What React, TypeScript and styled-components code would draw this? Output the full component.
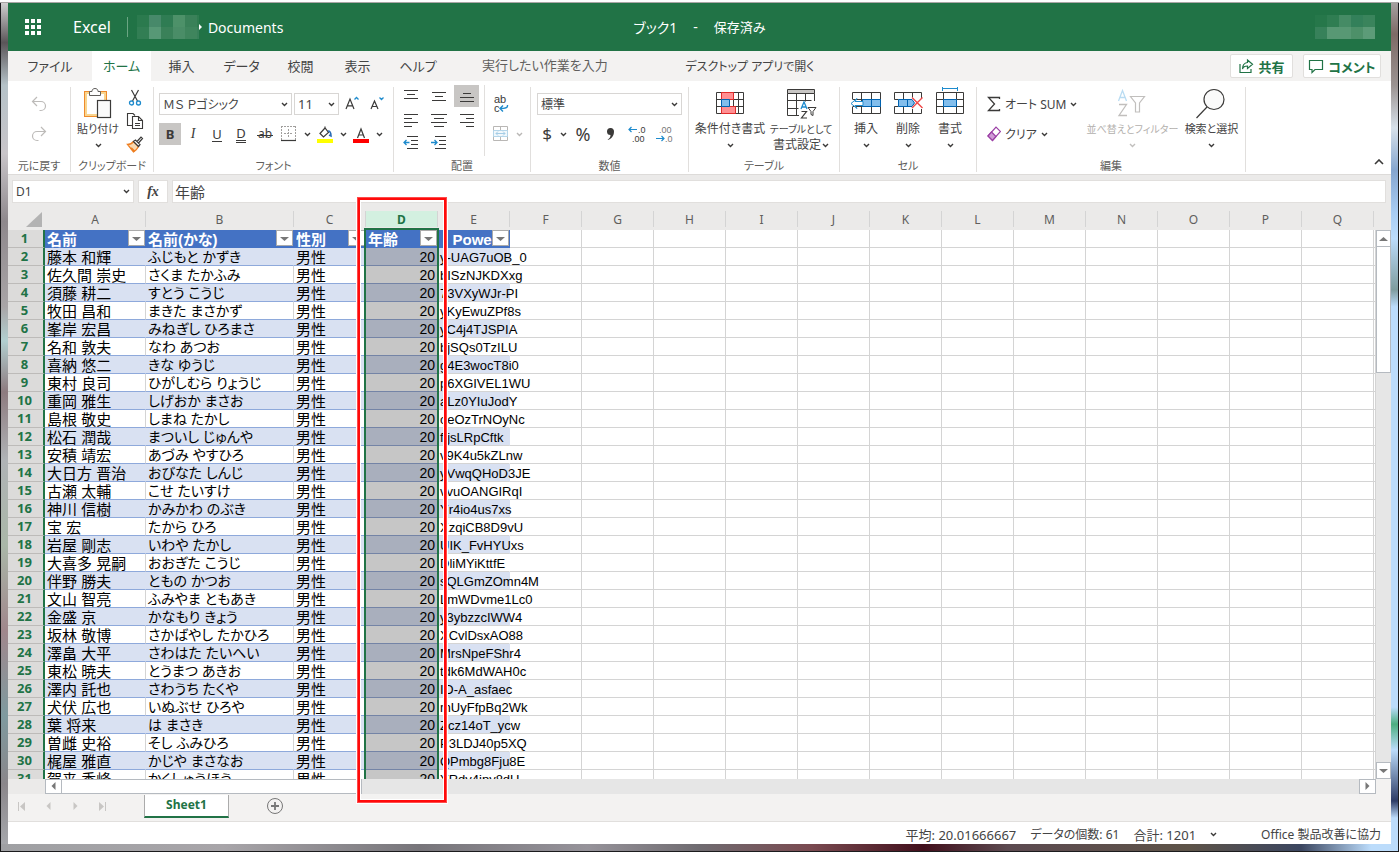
import React from "react";
import styled, { createGlobalStyle, css } from "styled-components";

const GREEN = "#217346";
const INK = "#444444";
const DARK = "#3b3a39";
const BLUE = "#1e8bcd";
const LINE = "#d4d4d4";

const GlobalStyle = createGlobalStyle`
  *, *::before, *::after { box-sizing: border-box; }
  body {
    margin: 0;
    font-family: "Noto Sans", "Noto Sans CJK JP", sans-serif;
    font-size: 12px;
    color: ${INK};
    font-feature-settings: "palt";
  }
  button, input, select { font: inherit; color: inherit; font-feature-settings: inherit; }
`;

/* ---------- window frame ---------- */

const Desktop = styled.div`
  display: flex;
  flex-direction: column;
  height: 100vh;
  min-height: 600px;
  padding: 3px 8px 8px;
  background:
    linear-gradient(#fdfdfd 0 2px, #a9a5a5 2px 3px) top / 100% 3px no-repeat,
    linear-gradient(#1b1b1d, #1b1b1d) left / 1px 100% no-repeat,
    linear-gradient(#1b1b1d, #1b1b1d) right / 1px 100% no-repeat,
    linear-gradient(#1b1b1d, #1b1b1d) bottom / 100% 1px no-repeat,
    linear-gradient(90deg, #9fa0a3, #a8a5a9 16%, #77757a 30%, #96939a 42%, #6f6b70 50%, #7a4a50 58%, #42101c 66%, #5c4a50 72%, #5d5348 85%, #3b4660 93%, #bcdcfb 98%) bottom / 100% 8px no-repeat,
    linear-gradient(#a9a5a5, #7d6a66 4%, #9b9391 10%, #d7e1ea 15%, #86a6cf 20%, #a9cdf3 25%, #bcdcfb 28%, #7f9c9e 34%, #bcdcfb 36%, #bcdcfb 83%, #4cae80 85%, #bcdcfb 88%, #2d3c66 94%, #bcdcfb 96%) right / 8px 100% no-repeat,
    linear-gradient(#d8d8d8, #5a5558 5%, #b5c2c8 10%, #c9c5c9 18%, #8e888c 26%, #a9a5a7 36%, #b2cfd0 40%, #8d7b7f 46%, #b0b3b6 54%, #aab7a8 64%, #a0878c 74%, #7f9a9f 84%, #8a868a 92%, #a9abaf) left / 8px 100% no-repeat;
`;

const AppWindow = styled.div`
  position: relative;
  flex: 1;
  min-height: 0;
  display: flex;
  flex-direction: column;
  background: #fff;
`;

/* ---------- title bar ---------- */

const TitleBar = styled.header`
  display: grid;
  grid-template-columns: 1fr auto 1fr;
  align-items: center;
  height: 48px;
  flex: none;
  background: ${GREEN};
  color: #fff;
  font-size: 14px;
`;
const TitleSide = styled.div<{ $end?: boolean }>`
  display: flex;
  align-items: center;
  height: 100%;
  ${(p) => (p.$end ? "justify-content: flex-end; padding: 0 16px 0 0;" : "padding: 0 0 0 16px;")}
`;
const PlainButton = styled.button`
  display: inline-flex;
  align-items: center;
  justify-content: center;
  padding: 0;
  border: 0;
  background: none;
  cursor: pointer;
`;
const Brand = styled.a`
  margin: 0 16px 0 31px;
  color: #fff;
  font-size: 16px;
  text-decoration: none;
`;
const Crumb = styled.a`
  color: #fff;
  text-decoration: none;
`;
const TitleRule = styled.span`
  width: 1px;
  height: 20px;
  margin-right: 9px;
  background: #6ba583;
`;
const Mosaic = styled.div`
  display: grid;
  grid-auto-rows: 12px;
  overflow: hidden;
`;
const Tile = styled.span``;
const Title = styled.h1`
  display: flex;
  gap: 16px;
  margin: 0;
  font-size: 14px;
  font-weight: 400;
`;
const Saved = styled.span`
  font-size: 13px;
  line-height: 20px;
`;

/* ---------- tabs ---------- */

const TabBar = styled.nav`
  display: flex;
  align-items: center;
  height: 30px;
  flex: none;
  padding-right: 10px;
  background: #f3f2f1;
  font-size: 13px;
`;
const Tab = styled.button<{ $active?: boolean; $w: number }>`
  width: ${(p) => p.$w}px;
  height: 30px;
  padding: 0 0 2px;
  border: 0;
  white-space: nowrap;
  background: ${(p) => (p.$active ? "#fff" : "none")};
  color: ${(p) => (p.$active ? GREEN : INK)};
`;
const OpenInApp = styled(Tab)`
  padding: 0;
  font-size: 12px;
`;
const TellMe = styled.input`
  width: 198px;
  margin-left: 31px;
  padding: 0 0 2px;
  border: 0;
  background: none;
  outline: 0;
  &::placeholder { color: #605e5c; opacity: 1; }
`;
const Spacer = styled.div`
  flex: 1;
`;
const CardButton = styled.button<{ $w: number }>`
  display: flex;
  align-items: center;
  justify-content: center;
  gap: 4px;
  width: ${(p) => p.$w}px;
  height: 24px;
  margin-left: 10px;
  padding: 0;
  border: 1px solid #e1dfdd;
  border-radius: 2px;
  background: #fff;
  color: ${GREEN};
  font-size: 13px;
  font-weight: 700;
`;

/* ---------- ribbon ---------- */

const Ribbon = styled.section`
  display: flex;
  height: 93px;
  flex: none;
  padding: 6px 0 2px;
  background: #fff;
`;
const Group = styled.div<{ $w: number }>`
  display: flex;
  flex-direction: column;
  width: ${(p) => p.$w}px;
  flex: none;
  border-right: 1px solid #e1dfdd;
`;
const GroupBody = styled.div`
  display: flex;
  flex: 1;
  min-height: 0;
`;
const GroupLabel = styled.div`
  height: 16px;
  line-height: 20px;
  font-size: 11px;
  text-align: center;
  white-space: nowrap;
  color: #605e5c;
`;
const Stack = styled.div<{ $pad?: string }>`
  display: flex;
  flex-direction: column;
  padding: ${(p) => p.$pad || "0"};
`;
const Row = styled.div<{ $pad?: string; $gap?: number; $top?: boolean }>`
  display: flex;
  align-items: ${(p) => (p.$top ? "flex-start" : "center")};
  padding: ${(p) => p.$pad || "0"};
  gap: ${(p) => p.$gap || 0}px;
`;
const Tool = styled(PlainButton)<{ $w?: number; $h?: number; $on?: boolean }>`
  width: ${(p) => p.$w || 24}px;
  height: ${(p) => p.$h || 22}px;
  flex: none;
  background: ${(p) => (p.$on ? "#c8c6c4" : "none")};
`;
const Big = styled.button<{ $w: number; $off?: boolean }>`
  display: flex;
  flex-direction: column;
  align-items: center;
  width: ${(p) => p.$w}px;
  flex: none;
  padding: 0;
  border: 0;
  background: none;
  line-height: 16px;
  white-space: nowrap;
  color: ${(p) => (p.$off ? "#b3b0ad" : INK)};
  > svg:first-child { margin-bottom: 2px; flex: none; }
`;
const BigText = styled.span<{ $size?: number }>`
  display: flex;
  align-items: center;
  justify-content: center;
  gap: 1px;
  height: 16px;
  font-size: ${(p) => p.$size || 12}px;
`;
const Glyph = styled.span<{ $kind?: "b" | "i" | "u" | "d" | "s"; $size?: number }>`
  font-size: ${(p) => p.$size || 13}px;
  line-height: 16px;
  color: ${DARK};
  ${(p) => p.$kind === "b" && css`font-weight: 700;`}
  ${(p) => p.$kind === "i" && css`font-family: "Liberation Serif", serif; font-style: italic; font-size: 14px;`}
  ${(p) => p.$kind === "u" && css`line-height: 14px; border-bottom: 1px solid ${DARK};`}
  ${(p) => p.$kind === "d" && css`line-height: 14px; border-bottom: 3px double ${DARK};`}
  ${(p) => p.$kind === "s" && css`
    padding: 0 1px;
    font-size: 12px;
    background: linear-gradient(${DARK}, ${DARK}) 0 9px / 100% 1px no-repeat;
  `}
`;
const PickBox = styled.label<{ $w: number }>`
  display: grid;
  align-items: center;
  width: ${(p) => p.$w}px;
  height: 22px;
  flex: none;
  border: 1px solid #d8d6d4;
  background: #fff;
  > * { grid-area: 1 / 1; }
  > svg { justify-self: end; margin-right: 3px; pointer-events: none; }
`;
const Pick = styled.select<{ $size?: number }>`
  appearance: none;
  width: 100%;
  height: 20px;
  padding: 0 12px 0 3px;
  border: 0;
  background: none;
  font-size: ${(p) => p.$size || 12}px;
  outline: 0;
`;
const VRule = styled.div`
  width: 1px;
  height: 71px;
  margin: -2px 0 0 5px;
  background: #e1dfdd;
`;
const AlignGrid = styled.div`
  display: grid;
  grid-template-columns: 28px 27px 27px;
  grid-auto-rows: 23px;
  justify-items: center;
  margin: -2px 0 0 3px;
  > :nth-child(3n) { justify-self: end; }
`;
const TextTool = styled.button`
  display: flex;
  align-items: center;
  gap: 4px;
  height: 30px;
  padding: 0;
  border: 0;
  background: none;
  white-space: nowrap;
`;
const Collapse = styled(PlainButton)`
  align-self: flex-end;
  width: 14px;
  height: 14px;
  margin: 0 5px 3px auto;
`;

/* ---------- formula bar ---------- */

const FormulaBar = styled.div`
  display: flex;
  gap: 4px;
  height: 33px;
  flex: none;
  padding: 5px 5px 5px 4px;
  border-top: 1px solid #dddbd9;
  background: #ebeae9;
`;
const NameBox = styled(PickBox)`
  height: 23px;
  border-color: #e1dfdd;
`;
const FxButton = styled(PlainButton)`
  width: 30px;
  height: 23px;
  border: 1px solid #e1dfdd;
  background: #fff;
  font: italic 700 14px "Liberation Serif", serif;
`;
const FormulaInput = styled.input`
  flex: 1;
  min-width: 0;
  height: 23px;
  padding: 0 2px;
  border: 1px solid #e1dfdd;
  background: #fff;
  font-size: 15px;
  font-family: "Liberation Sans", "Noto Sans CJK JP", sans-serif;
  outline: 0;
`;

/* ---------- sheet ---------- */

const SheetArea = styled.div`
  display: flex;
  flex: 1;
  min-height: 0;
  background: #fff;
`;
const Grid = styled.div`
  position: relative;
  flex: 1;
  min-width: 0;
  overflow: hidden;
`;
const Table = styled.table`
  width: 100%;
  table-layout: fixed;
  border-collapse: separate;
  border-spacing: 0;
`;
const ColHead = styled.th<{ $on?: boolean }>`
  height: 23px;
  padding: 4px 0 3px;
  background: #ebeae9;
  font-size: 12px;
  line-height: 18px;
  font-weight: ${(p) => (p.$on ? 700 : 400)};
  color: ${(p) => (p.$on ? GREEN : "#605e5c")};
  > span {
    display: block;
    height: 16px;
    border-right: 1px solid ${LINE};
    background: ${(p) => (p.$on ? "#d3f0e0" : "none")};
  }
`;
const Corner = styled.th`
  padding: 0;
  background: #ebeae9;
  vertical-align: bottom;
  > svg { display: block; margin: 0 0 3px 18px; }
`;
const RowHead = styled.th`
  height: 18px;
  padding: 0 2px 0 0;
  border-right: 2px solid ${GREEN};
  border-bottom: 1px solid #bdbbb9;
  background: #dcdbda;
  color: ${GREEN};
  font-size: 13px;
  line-height: 17px;
`;
const cellBase = css`
  height: 18px;
  padding: 2px 0 0 2px;
  font-family: "Liberation Sans", "Noto Sans CJK JP", sans-serif;
  line-height: 15px;
  white-space: nowrap;
  text-align: left;
`;
const Cell = styled.td<{ $band?: boolean; $kind?: "num" | "spill" | "kanji" | "kana" }>`
  ${cellBase}
  border-bottom: 1px solid ${(p) => (p.$kind ? "#8ea9db" : LINE)};
  border-right: 1px solid ${(p) => (p.$kind === "spill" ? "transparent" : p.$kind && p.$band ? "transparent" : LINE)};
  background: ${(p) => (p.$band && p.$kind ? "#d9e1f2" : "transparent")};
  font-size: ${(p) => (p.$kind === "kanji" ? 15 : 14)}px;
  color: #000;
  ${(p) =>
    p.$kind === "num" &&
    css`
      padding: 2px 2px 0 0;
      text-align: right;
      background: ${p.$band ? "#a9afbd" : "#c6c6c6"};
      border-bottom-color: #7484a6;
    `}
  ${(p) => p.$kind === "spill" && css`font-size: 13px; border-bottom-color: ${LINE};`}
`;
const FieldHead = styled.th`
  ${cellBase}
  padding: 0 1px 0 2px;
  border-bottom: 1px solid #4472c4;
  background: #4472c4;
  color: #fff;
  font-size: 15px;
  font-weight: 700;
  > div { display: flex; height: 17px; }
  > div > span { flex: 1; min-width: 0; overflow-x: clip; line-height: 20px; }
`;
const Filter = styled(PlainButton)`
  width: 17px;
  height: 16px;
  flex: none;
  border: 1px solid #ababab;
  background: #fff;
`;
const Selection = styled.div`
  position: absolute;
  top: 21px;
  bottom: 0;
  left: 356px;
  width: 75px;
  border: 2px solid ${GREEN};
  border-bottom: 0;
  pointer-events: none;
`;
const VScroll = styled.div`
  display: flex;
  flex-direction: column;
  width: 15px;
  flex: none;
  padding-top: 23px;
  background: linear-gradient(#ebeae9 0 23px, #e6e6e6 23px);
`;
const ScrollButton = styled(PlainButton)<{ $w: number; $h: number }>`
  width: ${(p) => p.$w}px;
  height: ${(p) => p.$h}px;
  flex: none;
  border: 1px solid #b5bac0;
  background: #fff;
`;
const VThumb = styled.div`
  height: 126px;
  border: 1px solid #b5bac0;
  border-top: 0;
  background: #fff;
`;
const HScroll = styled.div`
  display: flex;
  height: 15px;
  flex: none;
  margin: 0 15px 0 0;
  padding-left: 37px;
  background: linear-gradient(90deg, #ebeae9 0 37px, #e6e6e6 37px);
`;
const HThumb = styled.div`
  width: 300px;
  border: 1px solid #b5bac0;
  border-left: 0;
  background: #fff;
`;
const Bottom = styled.div`
  flex: none;
  background: #f3f2f1;
`;
const SheetTabs = styled.div`
  display: flex;
  align-items: center;
  height: 28px;
  padding: 0 0 3px 7px;
  border-bottom: 1px solid #e1dfdd;
`;
const NavButton = styled(PlainButton)`
  width: 12px;
  height: 12px;
  margin-right: 15px;
`;
const SheetTab = styled.button`
  width: 85px;
  height: 23px;
  margin: 0 37px 0 21px;
  padding: 0;
  border: 1px solid #ababab;
  border-width: 0 1px 2px;
  border-bottom-color: ${GREEN};
  background: #fff;
  color: ${GREEN};
  font-size: 12px;
  font-weight: 700;
  line-height: 16px;
`;
const StatusBar = styled.footer`
  display: flex;
  align-items: center;
  justify-content: flex-end;
  gap: 14px;
  height: 22px;
  flex: none;
  padding: 2px 10px 0 0;
  background: #fff;
  font-size: 12px;
  white-space: nowrap;
  > a { margin-left: 30px; color: inherit; text-decoration: none; }
`;
const Stat = styled.span`
  font-size: 13px;
`;
/* Red highlight laid over the selected column */
const Highlight = styled.div`
  position: absolute;
  top: 195px;
  bottom: 42px;
  left: 350px;
  width: 88px;
  border: 2px solid #ff0a0a;
  box-shadow: 0 0 0 1px #ff4a4a, 0 0 0 2px #fff, inset 0 0 0 1px #fff;
  pointer-events: none;
`;

/* ---------- icons ---------- */

const Chev = ({ color = DARK, up }: { color?: string; up?: boolean }) => (
  <svg width="7" height="5" viewBox="0 0 7 5" fill="none" stroke={color} strokeWidth="1.4">
    <path d={up ? "M.7 4 3.5 1.2 6.3 4" : "M1 1l2.500 2.500L6 1"} />
  </svg>
);
const Tri = ({ d, color = "#777" }: { d: string; color?: string }) => (
  <svg width="9" height="9" viewBox="0 0 9 9" fill={color}>
    <path d={d} />
  </svg>
);
const TRI = {
  down: "M0 3h9L4.500 7z",
  up: "M0 7h9L4.500 3z",
  left: "M6.500 0v8L2.500 4z",
  right: "M2.500 0v8L6.500 4z",
};

const Waffle = () => (
  <svg width="18" height="18" viewBox="0 0 18 18" fill="#fff">
    {[1, 7, 13].map((y) => [1, 7, 13].map((x) => <rect key={`${x}-${y}`} x={x} y={y} width="4" height="4" />))}
  </svg>
);
const UndoIcon = ({ flip }: { flip?: boolean }) => (
  <svg width="16" height="16" viewBox="0 0 16 16" fill="none" stroke="#bdbbb9" strokeWidth="1.2">
    <g transform={flip ? "matrix(-1 0 0 1 16 0)" : undefined}>
      <path d="M6 1 1.500 5.500 6 10M1.500 5.500H10a4.500 4.500 0 0 1 0 9H8.500" />
    </g>
  </svg>
);
const PasteIcon = () => (
  <svg width="30" height="32" viewBox="0 0 30 32" fill="none">
    <rect x="2.500" y="5.500" width="20" height="23" fill="#fff" stroke="#f9d58f" strokeWidth="3" />
    <rect x="1.500" y="4.500" width="22" height="25" stroke="#ee8b2c" />
    <path d="M6.500 8.500v-4H9C9 2.500 10.200 1.500 12 1.500s3 1 3 3h2.500v4z" fill="#fff" stroke="#605e5c" />
    <rect x="14.500" y="13.500" width="13" height="17" fill="#fafafa" stroke={DARK} strokeWidth="1.200" />
  </svg>
);
const CutIcon = () => (
  <svg width="16" height="18" viewBox="0 0 16 18" fill="none">
    <path d="M4.500 1 10.500 12M11.500 1 5.500 12" stroke={DARK} strokeWidth="1.200" />
    <circle cx="4.500" cy="14" r="2" stroke={BLUE} strokeWidth="1.300" />
    <circle cx="11.500" cy="14" r="2" stroke={BLUE} strokeWidth="1.300" />
  </svg>
);
const CopyIcon = () => (
  <svg width="18" height="18" viewBox="0 0 18 18" fill="none" stroke={DARK} strokeWidth="1.100">
    <path d="M6 13.500H1.500v-12H7l2 2M6.500 4.500h6l4 4v8h-10zM12.500 4.500v4h4M9 11.500h5M9 13.500h5" />
  </svg>
);
const BrushIcon = () => (
  <svg width="18" height="18" viewBox="0 0 18 18" fill="none">
    <path d="M1.500 9.500c3 0 4.500-1 6-3l5 5c-1 2-2.500 4-5 5.500z" fill="#f9d9b0" stroke="#ee7f22" strokeWidth="1.300" />
    <path d="m5 13 3.500 3.500" stroke="#ee7f22" strokeWidth="2" />
    <path d="m7.500 6.500 2-1.500 4.500 4.500-1.500 2zM11 6.500 15 2l1.500 1.500-4 4.500" fill="#fff" stroke={DARK} strokeWidth="1.200" />
  </svg>
);
const FontSizeIcon = ({ down }: { down?: boolean }) => (
  <svg width="18" height="16" viewBox="0 0 18 16" fill="none">
    <path d={down ? "M3 13 6.500 5 10 13M4.200 10.500h4.600" : "M2 13 6 3l4 10M3.400 9.800h5.200"} stroke={DARK} strokeWidth="1.200" />
    <path d={down ? "m11.500 1.500 2 2 2-2" : "m10.500 3.500 2-2 2 2"} stroke={BLUE} strokeWidth="1.300" />
  </svg>
);
const BorderIcon = () => (
  <svg width="16" height="16" viewBox="0 0 16 16" fill="none" stroke="#a19f9d">
    <path d="M0 .5h15M.5 0v14M14.500 0v14M7.500 3v9M3 7.500h9" strokeDasharray="2 1" />
    <path d="M0 14.500h15" stroke={DARK} strokeWidth="1.200" />
  </svg>
);
const FillIcon = () => (
  <svg width="17" height="17" viewBox="0 0 17 17" fill="none">
    <path d="M3 7.500 8 2l3.500 4.500-5 4.500zM8 2V.5" stroke={DARK} strokeWidth="1.200" />
    <path d="M11 5c2 0 3 1 3 5l-2-1" stroke="#2b6cb5" strokeWidth="1.600" />
    <rect y="13" width="16" height="4" fill="#ffff00" />
  </svg>
);
const FontColorIcon = () => (
  <svg width="17" height="17" viewBox="0 0 17 17" fill="none">
    <path d="M4.500 12 8 3l3.500 9M5.700 9h4.600" stroke={DARK} strokeWidth="1.200" />
    <rect y="13" width="16" height="4" fill="#ff0000" />
  </svg>
);
const LINES: Record<string, string> = {
  top: "M0 1.500h14M3 5.500h8M0 9.500h14",
  mid: "M0 3.500h14M3 7.500h8M0 11.500h14",
  bot: "M3 4.500h8M0 8.500h14M0 12.500h14",
  left: "M0 1.500h14M0 5.500h8M0 9.500h14M0 13.500h8",
  center: "M0 1.500h16M3 5.500h10M0 9.500h16M3 13.500h10",
  right: "M0 1.500h14M6 5.500h8M0 9.500h14M6 13.500h8",
};
const LinesIcon = ({ k }: { k: string }) => (
  <svg width={k === "center" ? 16 : 14} height="15" viewBox={`0 0 ${k === "center" ? 16 : 14} 15`} stroke={DARK}>
    <path d={LINES[k]} />
  </svg>
);
const IndentIcon = ({ more }: { more?: boolean }) => (
  <svg width="16" height="14" viewBox="0 0 16 14" fill="none" stroke={DARK}>
    <path d="M4 .5h11M8 4.500h7M8 8.500h7M4 12.500h11" />
    <path d={more ? "M0 6.500h6M3.500 4 6 6.500 3.500 9" : "M6.500 6.500H1M3.500 4 1 6.500 3.500 9"} stroke={BLUE} strokeWidth="1.300" />
  </svg>
);
const svgText = { fontFamily: '"Liberation Sans", sans-serif' };
const WrapIcon = () => (
  <svg width="18" height="22" viewBox="0 0 18 22" fill="none">
    <text x="2" y="10" fontSize="11" fill={DARK} style={svgText}>ab</text>
    <text x="2" y="19" fontSize="11" fill={DARK} style={svgText}>c</text>
    <path d="M15.500 12v1c0 2-2 2.500-7 2.500M11 12.500l-3 3 3 3" stroke={BLUE} strokeWidth="1.400" />
  </svg>
);
const MergeIcon = () => (
  <svg width="16" height="16" viewBox="0 0 16 16" fill="none" stroke="#b9b7b5">
    <path d="M.5.5h14v14H.5zM7.500.5V4M7.500 11v3.500" />
    <path d="M.5 4.500h14v6H.5z" stroke="#b5d6ea" fill="#f1f8fc" />
    <path d="M3 7.500h9M5 5.500l-2 2 2 2M10 5.500l2 2-2 2" stroke="#a5cde6" />
  </svg>
);
const DecIcon = ({ less }: { less?: boolean }) => (
  <svg width="20" height="22" viewBox="0 0 20 22" fill="none">
    <text x={less ? 4 : 10} y="10" fontSize="9" fill={less ? "#777" : DARK} style={svgText}>{less ? ".00" : ".0"}</text>
    <text x={less ? 10 : 4} y="19" fontSize="9" fill={less ? "#777" : DARK} style={svgText}>{less ? ".0" : ".00"}</text>
    <path d={less ? "M1 15.500h8M6.500 13 9 15.500 6.500 18" : "M9 6.500H1M3.500 4 1 6.500 3.500 9"} stroke={BLUE} strokeWidth="1.200" />
  </svg>
);
const CondIcon = () => (
  <svg width="30" height="32" viewBox="0 0 30 32" fill="none">
    <path d="M1.500 5.500h27v21h-27zM1.500 12.500h27M1.500 19.500h27M6.500 5.500v21M18.500 5.500v21M23.500 5.500v21" stroke={DARK} />
    <path d="M6.500 5.500h12v7h-12zM6.500 19.500h14v7h-14z" fill="#ff8f92" stroke="#e02b2b" />
    <path d="M6.500 12.500h8v7h-8z" fill="#83beec" stroke="#0063b1" />
  </svg>
);
const TableIcon = () => (
  <svg width="32" height="32" viewBox="0 0 32 32" fill="none">
    <path d="M2.500 2.500h27v4h-27z" fill="#c8c6c4" stroke={DARK} />
    <path d="M2.500 6.500v22H14M29.500 6.500V14M2.500 13.500h24M2.500 21.500h11M11.500 6.500v22M20.500 6.500v8" stroke={DARK} />
    <path d="M16 22l3-7 3 7M17 20h4" stroke={BLUE} strokeWidth="1.300" />
    <path d="M16.500 24.500h5l-5 6.500h5.500" stroke={DARK} strokeWidth="1.200" />
    <path d="M23 20.500h8l-3 4v4l-2-1v-3z" stroke={DARK} />
  </svg>
);
const InsertIcon = () => (
  <svg width="32" height="32" viewBox="0 0 32 32" fill="none">
    <path d="M2.500 12V5.500h28v21h-28V20M11.500 5.500v21M21.500 5.500v21M2.500 12.500h28M2.500 19.500h28" stroke={DARK} />
    <path d="M12.500 12.500h18v7h-18zM21.500 12.500v7" fill="#83beec" stroke="#0063b1" />
    <path d="M13 14.500H5l2-3-6 5 6 5-2-3h8z" fill="#fff" stroke={BLUE} />
  </svg>
);
const DeleteIcon = () => (
  <svg width="32" height="32" viewBox="0 0 32 32" fill="none">
    <path d="M2.500 12.500v-7h27V12M2.500 19.500v7h27V22M11.500 5.500v7M20.500 5.500v5M11.500 19.500v7M20.500 22v4.500M2.500 12.500h4M2.500 19.500h4" stroke={DARK} />
    <path d="M6.500 12.500H20l2.500 3.500-2.500 3.500H6.500zM15.500 12.500v7" fill="#83beec" stroke="#0063b1" />
    <path d="M20 10.500 30.500 21M30.500 10.500 20 21" stroke="#f04747" strokeWidth="1.400" />
  </svg>
);
const FormatIcon = () => (
  <svg width="32" height="32" viewBox="0 0 32 32" fill="none">
    <path d="M2.500 5.500h27v21h-27zM9.500 5.500v21M22.500 5.500v21M2.500 12.500h27M2.500 19.500h27" stroke={DARK} />
    <path d="M9.500 12.500h13v7h-13z" fill="#83beec" stroke="#0063b1" />
    <path d="M8.500 1.500h15M8.500 0v4M23.500 0v4" stroke={BLUE} />
  </svg>
);
const SigmaIcon = () => (
  <svg width="14" height="16" viewBox="0 0 14 16" fill="none" stroke={DARK} strokeWidth="1.300">
    <path d="M12.500 3V1.500h-11L7.500 8l-6 6.500h11V13" />
  </svg>
);
const EraserIcon = () => (
  <svg width="14" height="16" viewBox="0 0 14 16" fill="none" stroke="#9b3fa5" strokeWidth="1.200">
    <path d="m1 10 8-9 4.500 4.500-8 9z" fill="#fff" />
    <path d="M4.500 6 9 10.500l-3.500 4L1 10z" fill="#cf9bd6" />
  </svg>
);
const SortIcon = () => (
  <svg width="30" height="32" viewBox="0 0 30 32" fill="none">
    <path d="m1.500 14 4-10.500 4 10.500M3 10.500h5" stroke="#b9dcf2" strokeWidth="1.300" />
    <path d="M2 17.500h7.500L2 28.500h8" stroke="#c1bfbd" strokeWidth="1.300" />
    <path d="M13.500 9.500h14L22.500 16v9h-4v-9z" stroke="#c1bfbd" strokeWidth="1.200" />
  </svg>
);
const FindIcon = () => (
  <svg width="32" height="32" viewBox="0 0 32 32" fill="#fafafa" stroke={DARK} strokeWidth="1.200">
    <circle cx="19" cy="12.500" r="10" />
    <path d="M12 20 1.500 31" />
  </svg>
);
const ShareIcon = () => (
  <svg width="16" height="16" viewBox="0 0 16 16" fill="none" stroke={GREEN} strokeWidth="1.200">
    <path d="M2 6v8.500h11V11M9.500 2l5 4.200-5 4.200V8C7 8 5 9 4.500 11 4.500 7.500 6 5 9.500 4.500z" />
  </svg>
);
const CommentIcon = () => (
  <svg width="16" height="16" viewBox="0 0 16 16" fill="none" stroke={GREEN} strokeWidth="1.200">
    <path d="M1.500 2.500h13v9H7l-3 3v-3H1.500z" />
  </svg>
);

/* ---------- data ---------- */

const ROWS: [string, string, string][] = [
  ["藤本 和輝", "ふじもと かずき", "y-UAG7uOB_0"],
  ["佐久間 崇史", "さくま たかふみ", "bISzNJKDXxg"],
  ["須藤 耕二", "すとう こうじ", "73VXyWJr-PI"],
  ["牧田 昌和", "まきた まさかず", "yKyEwuZPf8s"],
  ["峯岸 宏昌", "みねぎし ひろまさ", "yC4j4TJSPIA"],
  ["名和 敦夫", "なわ あつお", "bjSQs0TzILU"],
  ["喜納 悠二", "きな ゆうじ", "g4E3wocT8i0"],
  ["東村 良司", "ひがしむら りょうじ", "p6XGIVEL1WU"],
  ["重岡 雅生", "しげおか まさお", "aLz0YIuJodY"],
  ["島根 敬史", "しまね たかし", "oeOzTrNOyNc"],
  ["松石 潤哉", "まついし じゅんや", "ftjsLRpCftk"],
  ["安積 靖宏", "あづみ やすひろ", "v9K4u5kZLnw"],
  ["大日方 晋治", "おびなた しんじ", "yVwqQHoD3JE"],
  ["古瀬 太輔", "こせ たいすけ", "vvuOANGIRqI"],
  ["神川 信樹", "かみかわ のぶき", "Yr4io4us7xs"],
  ["宝 宏", "たから ひろ", "XzqiCB8D9vU"],
  ["岩屋 剛志", "いわや たかし", "UIK_FvHYUxs"],
  ["大喜多 晃嗣", "おおぎた こうじ", "DliMYiKttfE"],
  ["伴野 勝夫", "ともの かつお", "sQLGmZOmn4M"],
  ["文山 智亮", "ふみやま ともあき", "LmWDvme1Lc0"],
  ["金盛 京", "かなもり きょう", "y3ybzzcIWW4"],
  ["坂林 敬博", "さかばやし たかひろ", "XCvlDsxAO88"],
  ["澤畠 大平", "さわはた たいへい", "MrsNpeFShr4"],
  ["東松 暁夫", "とうまつ あきお", "tdk6MdWAH0c"],
  ["澤内 託也", "さわうち たくや", "IO-A_asfaec"],
  ["犬伏 広也", "いぬぶせ ひろや", "mUyFfpBq2Wk"],
  ["葉 将来", "は まさき", "Zcz14oT_ycw"],
  ["曽雌 史裕", "そし ふみひろ", "P3LDJ40p5XQ"],
  ["梶屋 雅直", "かじや まさなお", "QPmbg8Fju8E"],
  ["賀来 秀峰", "かくしゅうほう", "YRdy4jpy8dU"],
];
const COLS = "ABCDEFGHIJKLMNOPQ".split("");
const EMPTY = COLS.slice(5);
const FIELDS = ["名前", "名前(かな)", "性別", "年齢", "\u00a0\u00a0\u00a0Power"];
const TABS: [string, number][] = [
  ["ファイル", 84],
  ["ホーム", 59],
  ["挿入", 61],
  ["データ", 59],
  ["校閲", 59],
  ["表示", 55],
  ["ヘルプ", 66],
];
const LEFT_TILES = ["#2b7a4e", "#47896a", "#2f7c53", "#4d9169", "#3a8159", "#2f7c50", "#327e54", "#579876", "#3a8159", "#4a8d67", "#3f855d", "#38805a"];
const RIGHT_TILES = ["#26774a", "#2f7d52", "#458b65", "#33805a", "#3a845c", "#37815a", "#589874", "#589874", "#4d9069", "#5c9b78"];

export default function App() {
  return (
    <>
      <GlobalStyle />
      <Desktop>
        <AppWindow>
          <TitleBar>
            <TitleSide>
              <PlainButton aria-label="アプリ起動ツール"><Waffle /></PlainButton>
              <Brand href="#">Excel</Brand>
              <TitleRule />
              <Mosaic style={{ gridTemplateColumns: "repeat(5, 12px) 2px" }}>
                {LEFT_TILES.map((c, i) => <Tile key={i} style={{ background: c }} />)}
              </Mosaic>
              <Row $pad="0 6px 0 0">
                <svg width="3" height="6" viewBox="0 0 3 6" fill="#fff"><path d="M0 0l3 3-3 3z" /></svg>
              </Row>
              <Crumb href="#">Documents</Crumb>
            </TitleSide>
            <Title>
              <span>ブック1</span>
              <span>-</span>
              <Saved>保存済み</Saved>
            </Title>
            <TitleSide $end>
              <Mosaic style={{ gridTemplateColumns: "repeat(5, 12px)" }}>
                {RIGHT_TILES.map((c, i) => <Tile key={i} style={{ background: c }} />)}
              </Mosaic>
            </TitleSide>
          </TitleBar>

          <TabBar>
            {TABS.map(([t, w]) => <Tab key={t} $w={w} $active={t === "ホーム"}>{t}</Tab>)}
            <TellMe aria-label="操作アシスト" placeholder="実行したい作業を入力" />
            <OpenInApp $w={140}>デスクトップ アプリで開く</OpenInApp>
            <Spacer />
            <CardButton $w={63}><ShareIcon />共有</CardButton>
            <CardButton $w={78}><CommentIcon />コメント</CardButton>
          </TabBar>

          <Ribbon>
            <Group $w={63}>
              <GroupBody>
                <Stack $pad="2px 15px">
                  <Tool $w={32} $h={30} aria-label="元に戻す"><UndoIcon /></Tool>
                  <Tool $w={32} $h={30} aria-label="やり直し"><UndoIcon flip /></Tool>
                </Stack>
              </GroupBody>
              <GroupLabel>元に戻す</GroupLabel>
            </Group>

            <Group $w={83}>
              <GroupBody>
                <Big $w={54}>
                  <PasteIcon />
                  <BigText $size={11}>貼り付け</BigText>
                  <BigText><Chev /></BigText>
                </Big>
                <Stack>
                  <Tool $w={20} $h={22} aria-label="切り取り"><CutIcon /></Tool>
                  <Tool $w={20} $h={24} aria-label="コピー"><CopyIcon /></Tool>
                  <Tool $w={20} $h={22} aria-label="書式のコピー"><BrushIcon /></Tool>
                </Stack>
              </GroupBody>
              <GroupLabel>クリップボード</GroupLabel>
            </Group>

            <Group $w={240}>
              <GroupBody>
                <Stack $pad="6px 0 0 5px">
                  <Row $gap={2}>
                    <PickBox $w={133}>
                      <Pick aria-label="フォント"><option>ＭＳ Ｐゴシック</option></Pick>
                      <Chev />
                    </PickBox>
                    <PickBox $w={45}>
                      <Pick aria-label="フォント サイズ" $size={13}><option>11</option></Pick>
                      <Chev />
                    </PickBox>
                    <Row>
                      <Tool aria-label="フォント サイズの拡大"><FontSizeIcon /></Tool>
                      <Tool aria-label="フォント サイズの縮小"><FontSizeIcon down /></Tool>
                    </Row>
                  </Row>
                  <Row $pad="8px 0 0">
                    <Tool $w={22} $on aria-label="太字"><Glyph $kind="b">B</Glyph></Tool>
                    <Tool aria-label="斜体"><Glyph $kind="i">I</Glyph></Tool>
                    <Tool aria-label="下線"><Glyph $kind="u">U</Glyph></Tool>
                    <Tool aria-label="二重下線"><Glyph $kind="d">D</Glyph></Tool>
                    <Tool aria-label="取り消し線"><Glyph $kind="s">ab</Glyph></Tool>
                    <Tool aria-label="罫線"><BorderIcon /></Tool>
                    <Tool $w={12} aria-label="罫線の種類"><Chev /></Tool>
                    <Tool aria-label="塗りつぶしの色"><FillIcon /></Tool>
                    <Tool $w={12} aria-label="塗りつぶしの色の選択"><Chev /></Tool>
                    <Tool aria-label="フォントの色"><FontColorIcon /></Tool>
                    <Tool $w={12} aria-label="フォントの色の選択"><Chev /></Tool>
                  </Row>
                </Stack>
              </GroupBody>
              <GroupLabel>フォント</GroupLabel>
            </Group>

            <Group $w={137}>
              <GroupBody>
                <AlignGrid>
                  <Tool aria-label="上揃え"><LinesIcon k="top" /></Tool>
                  <Tool aria-label="上下中央揃え"><LinesIcon k="mid" /></Tool>
                  <Tool $w={25} $on aria-label="下揃え"><LinesIcon k="bot" /></Tool>
                  <Tool $h={24} aria-label="左揃え"><LinesIcon k="left" /></Tool>
                  <Tool $h={24} aria-label="中央揃え"><LinesIcon k="center" /></Tool>
                  <Tool $w={25} $h={24} aria-label="右揃え"><LinesIcon k="right" /></Tool>
                  <Tool $h={24} aria-label="インデントを減らす"><IndentIcon /></Tool>
                  <Tool $h={24} aria-label="インデントを増やす"><IndentIcon more /></Tool>
                </AlignGrid>
                <VRule />
                <Stack $pad="6px 0 0 4px">
                  <Tool aria-label="折り返して全体を表示"><WrapIcon /></Tool>
                  <Row $pad="8px 0 0">
                    <Tool aria-label="セルを結合"><MergeIcon /></Tool>
                    <Tool $w={12} aria-label="結合の種類"><Chev color="#b9b7b5" /></Tool>
                  </Row>
                </Stack>
              </GroupBody>
              <GroupLabel>配置</GroupLabel>
            </Group>

            <Group $w={158}>
              <GroupBody>
                <Stack $pad="6px 0 0 6px">
                  <PickBox $w={145}>
                    <Pick aria-label="表示形式"><option>標準</option></Pick>
                    <Chev />
                  </PickBox>
                  <Row $pad="8px 0 0">
                    <Tool $w={20} aria-label="通貨"><Glyph $size={17}>$</Glyph></Tool>
                    <Tool $w={12} aria-label="通貨の種類"><Chev /></Tool>
                    <Tool $w={28} aria-label="パーセント"><Glyph $size={18}>%</Glyph></Tool>
                    <Tool $w={27} aria-label="桁区切り">
                      <svg width="9" height="14" viewBox="0 0 9 14" fill={DARK}><path d="M4.500 1a3.200 3.200 0 0 1 3.500 3.500C8 9 5 12.500 1.500 13c2-1.500 3-3 3-5A3.400 3.400 0 1 1 4.500 1z" /></svg>
                    </Tool>
                    <Tool $w={27} aria-label="小数点以下の桁数を増やす"><DecIcon /></Tool>
                    <Tool $w={27} aria-label="小数点以下の桁数を減らす"><DecIcon less /></Tool>
                  </Row>
                </Stack>
              </GroupBody>
              <GroupLabel>数値</GroupLabel>
            </Group>

            <Group $w={151}>
              <GroupBody>
                <Row $pad="0 0 0 5px" $top>
                  <Big $w={72}>
                    <CondIcon />
                    <BigText $size={12}>条件付き書式</BigText>
                    <BigText><Chev /></BigText>
                  </Big>
                  <Big $w={70}>
                    <TableIcon />
                    <BigText $size={10}>テーブルとして</BigText>
                    <BigText $size={12}>書式設定<Chev /></BigText>
                  </Big>
                </Row>
              </GroupBody>
              <GroupLabel>テーブル</GroupLabel>
            </Group>

            <Group $w={137}>
              <GroupBody>
                <Row $pad="0 0 0 5px" $top>
                  <Big $w={42}><InsertIcon /><BigText>挿入</BigText><BigText><Chev /></BigText></Big>
                  <Big $w={42}><DeleteIcon /><BigText>削除</BigText><BigText><Chev /></BigText></Big>
                  <Big $w={42}><FormatIcon /><BigText>書式</BigText><BigText><Chev /></BigText></Big>
                </Row>
              </GroupBody>
              <GroupLabel>セル</GroupLabel>
            </Group>

            <Group $w={269}>
              <GroupBody>
                <Row $pad="0 0 0 10px" $top>
                  <Stack $pad="2px 6px 0 0">
                    <TextTool><SigmaIcon />オート SUM<Chev /></TextTool>
                    <TextTool><EraserIcon />クリア<Chev /></TextTool>
                  </Stack>
                  <Big $w={98} $off><SortIcon /><BigText $size={10}>並べ替えとフィルター</BigText><BigText><Chev color="#c1bfbd" /></BigText></Big>
                  <Big $w={60}><FindIcon /><BigText $size={11}>検索と選択</BigText><BigText><Chev /></BigText></Big>
                </Row>
              </GroupBody>
              <GroupLabel>編集</GroupLabel>
            </Group>
            <Collapse aria-label="リボンを折りたたむ">
              <svg width="10" height="6" viewBox="0 0 10 6" fill="none" stroke={DARK} strokeWidth="1.600"><path d="m1 5 4-4 4 4" /></svg>
            </Collapse>
          </Ribbon>

          <FormulaBar>
            <NameBox $w={122}>
              <Pick aria-label="名前ボックス"><option>D1</option></Pick>
              <Chev />
            </NameBox>
            <FxButton aria-label="関数の挿入">fx</FxButton>
            <FormulaInput aria-label="数式バー" defaultValue="年齢" />
          </FormulaBar>

          <SheetArea>
            <Grid>
              <Table>
                <colgroup>
                  <col style={{ width: 37 }} />
                  <col style={{ width: 101 }} />
                  <col style={{ width: 148 }} />
                  {COLS.slice(2).map((c) => <col key={c} style={{ width: 72 }} />)}
                  <col />
                </colgroup>
                <thead>
                  <tr>
                    <Corner aria-label="すべて選択"><svg width="16" height="15" viewBox="0 0 16 15" fill="#b3b3b3"><path d="M16 0v15H0z" /></svg></Corner>
                    {COLS.map((c) => <ColHead key={c} scope="col" $on={c === "D"}><span>{c}</span></ColHead>)}
                    <Corner />
                  </tr>
                </thead>
                <tbody>
                  <tr>
                    <RowHead scope="row">1</RowHead>
                    {FIELDS.map((f) => (
                      <FieldHead key={f}>
                        <div>
                          <span>{f}</span>
                          <Filter aria-label={`${f.trim()} の絞り込み`}><Tri d={TRI.down} /></Filter>
                        </div>
                      </FieldHead>
                    ))}
                    {EMPTY.map((c) => <Cell key={c} />)}
                    <Cell />
                  </tr>
                  {ROWS.map(([name, kana, id], i) => {
                    const band = i % 2 === 0;
                    return (
                      <tr key={id}>
                        <RowHead scope="row">{i + 2}</RowHead>
                        <Cell $kind="kanji" $band={band}>{name}</Cell>
                        <Cell $kind="kana" $band={band}>{kana}</Cell>
                        <Cell $kind="kanji" $band={band}>男性</Cell>
                        <Cell $kind="num" $band={band}>20</Cell>
                        <Cell $kind="spill" $band={band}>{id}</Cell>
                        {EMPTY.map((c) => <Cell key={c} />)}
                        <Cell />
                      </tr>
                    );
                  })}
                </tbody>
              </Table>
              <Selection />
            </Grid>
            <VScroll>
              <ScrollButton $w={15} $h={17} aria-label="上へ"><Tri d={TRI.up} /></ScrollButton>
              <VThumb />
              <Spacer />
              <ScrollButton $w={15} $h={17} aria-label="下へ"><Tri d={TRI.down} /></ScrollButton>
            </VScroll>
          </SheetArea>

          <Bottom>
            <HScroll>
              <ScrollButton $w={17} $h={15} aria-label="左へ"><Tri d={TRI.left} /></ScrollButton>
              <HThumb />
              <Spacer />
              <ScrollButton $w={17} $h={15} aria-label="右へ"><Tri d={TRI.right} /></ScrollButton>
            </HScroll>
            <SheetTabs>
              <NavButton aria-label="最初のシート"><Tri color="#c8c6c4" d="M1 0h1v9H1zM8 0v9L3 4.500z" /></NavButton>
              <NavButton aria-label="前のシート"><Tri color="#c8c6c4" d={TRI.left} /></NavButton>
              <NavButton aria-label="次のシート"><Tri color="#c8c6c4" d={TRI.right} /></NavButton>
              <NavButton aria-label="最後のシート"><Tri color="#c8c6c4" d="M7 0h1v9H7zM1 0v9l5-4.500z" /></NavButton>
              <SheetTab>Sheet1</SheetTab>
              <PlainButton aria-label="新しいシート">
                <svg width="18" height="18" viewBox="0 0 18 18" fill="none" stroke="#777">
                  <circle cx="9" cy="9" r="7.500" />
                  <path d="M9 5v8M5 9h8" strokeWidth="1.800" />
                </svg>
              </PlainButton>
            </SheetTabs>
          </Bottom>
          <StatusBar>
            <Stat>平均: 20.01666667</Stat>
            <span>データの個数: 61</span>
            <Stat>合計: 1201</Stat>
            <Chev />
            <a href="#">Office 製品改善に協力</a>
          </StatusBar>
          <Highlight />
        </AppWindow>
      </Desktop>
    </>
  );
}
